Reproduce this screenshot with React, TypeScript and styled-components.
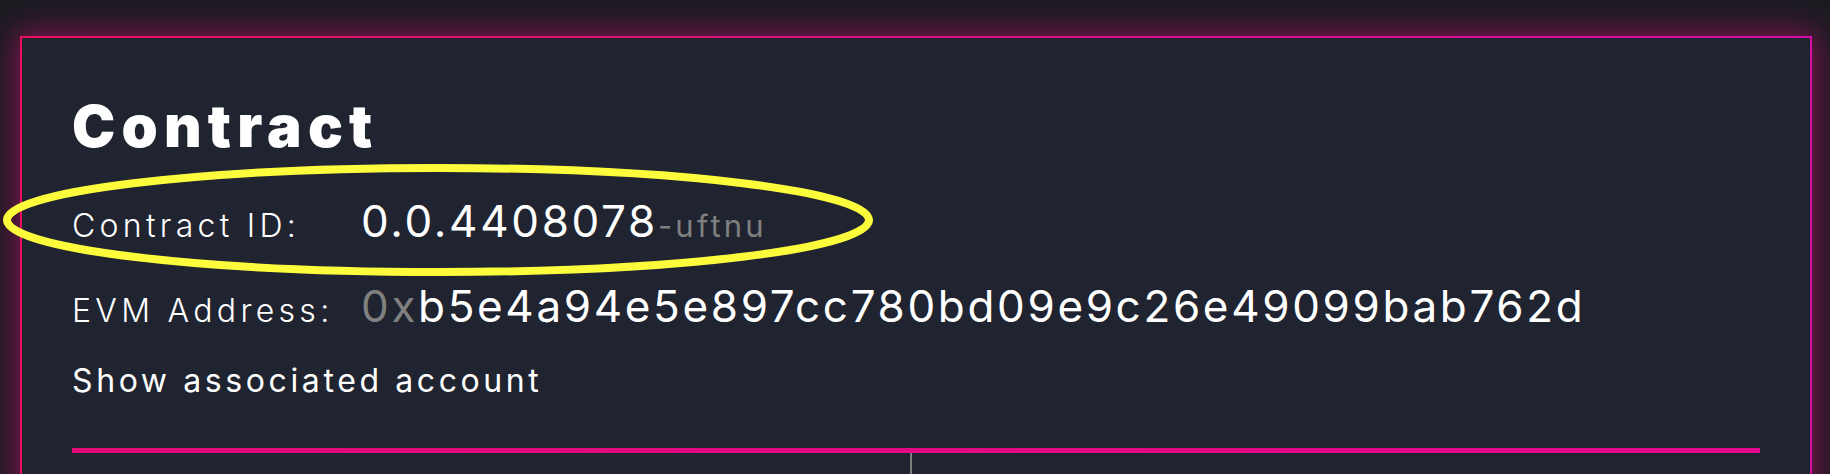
import React from "react";
import styled, { createGlobalStyle } from "styled-components";

const GlobalStyle = createGlobalStyle`
  html, body {
    margin: 0;
    padding: 0;
    background: #1c1b22;
    font-family: Inter, "Noto Sans", sans-serif;
    color: #ffffff;
  }
  #root {
    min-height: 474px;
  }
`;

const Page = styled.div`
  position: relative;
  padding: 36px 18px 0 20px;
  height: 474px;
  box-sizing: border-box;
  overflow: hidden;
`;

const Card = styled.section`
  background: #1f2430;
  border: 2px solid transparent;
  border-image: linear-gradient(90deg, #e8125a, #d40fa8) 1;
  box-shadow: 0 0 28px 4px rgba(214, 14, 120, 0.55);
  padding: 53px 50px 40px 50px;
  min-height: 600px;
`;

const Title = styled.h1`
  margin: 0;
  font-family: Inter, sans-serif;
  font-weight: 900;
  font-size: 58px;
  line-height: 70px;
  letter-spacing: 6.2px;
`;

const Details = styled.div`
  display: grid;
  grid-template-columns: 289px 1fr;
  align-items: baseline;
  row-gap: 24px;
  margin-top: 32px;
`;

const Label = styled.div`
  font-weight: 300;
  font-size: 32px;
  line-height: 56px;
  letter-spacing: 4.3px;
`;

const Value = styled.div`
  font-weight: 400;
  font-size: 44px;
  line-height: 56px;
  letter-spacing: 2.65px;
  white-space: nowrap;
`;

const Muted = styled.span<{ $size?: number }>`
  color: #808080;
  font-size: ${(p) => (p.$size ? `${p.$size}px` : "inherit")};
  letter-spacing: ${(p) => (p.$size ? "3.2px" : "inherit")};
`;

const LinkText = styled.a`
  display: block;
  margin-top: 22px;
  font-weight: 400;
  font-size: 32px;
  line-height: 40px;
  letter-spacing: 3.6px;
  color: #ffffff;
  text-decoration: none;
  cursor: pointer;
`;

const Split = styled.div`
  margin-top: 47px;
  border-top: 5px solid transparent;
  border-image: linear-gradient(90deg, #e20a78, #e2098e) 1;
  display: grid;
  grid-template-columns: 838px 1fr;
  min-height: 120px;
`;

const Column = styled.div<{ $divided?: boolean }>`
  border-left: ${(p) => (p.$divided ? "2px solid #7c7c7c" : "none")};
`;

const Annotation = styled.svg`
  position: absolute;
  left: 2px;
  top: 163px;
  width: 872px;
  height: 114px;
  pointer-events: none;
`;

export default function App() {
  return (
    <>
      <GlobalStyle />
      <Page>
        <Card>
          <Title>Contract</Title>
          <Details>
            <Label>Contract ID:</Label>
            <Value>
              0.0.4408078<Muted $size={31}>-uftnu</Muted>
            </Value>
            <Label>EVM Address:</Label>
            <Value>
              <Muted>0x</Muted>b5e4a94e5e897cc780bd09e9c26e49099bab762d
            </Value>
          </Details>
          <LinkText>Show associated account</LinkText>
          <Split>
            <Column />
            <Column $divided />
          </Split>
        </Card>
        <Annotation viewBox="0 0 872 114">
          <ellipse
            cx="436"
            cy="57"
            rx="431"
            ry="52"
            fill="none"
            stroke="#fdfc3c"
            strokeWidth="8"
          />
        </Annotation>
      </Page>
    </>
  );
}
